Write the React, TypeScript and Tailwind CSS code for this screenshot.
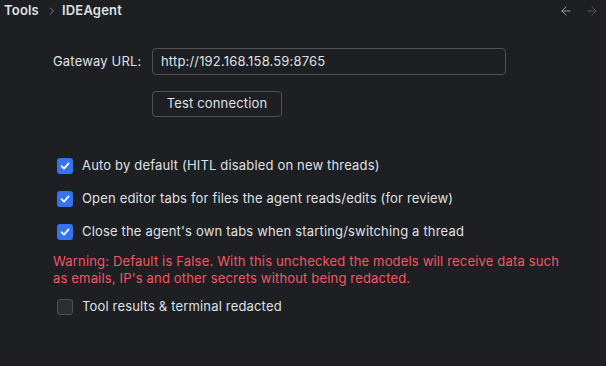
import { ArrowLeft, ArrowRight, ChevronRight } from "lucide-react";

const font = { fontFamily: "Inter, 'Noto Sans', sans-serif" };

const Check = ({ checked }: { checked: boolean }) =>
  checked ? (
    <span className="flex h-4 w-4 shrink-0 items-center justify-center rounded-[3px] bg-[#3574f0]">
      <svg width="12" height="12" viewBox="0 0 12 12" fill="none">
        <path d="M2.5 6.2 L5 8.6 L9.6 3.4" stroke="white" strokeWidth="1.7" strokeLinecap="round" strokeLinejoin="round" />
      </svg>
    </span>
  ) : (
    <span className="h-4 w-4 shrink-0 rounded-[3px] border border-[#4e5157] bg-[#2b2d30]" />
  );

const Row = ({ checked, label }: { checked: boolean; label: string }) => (
  <label className="flex h-4 items-center gap-[9px]">
    <Check checked={checked} />
    <span className="text-[13px] tracking-[0.17px] text-[#dfe1e5]">{label}</span>
  </label>
);

export default function App() {
  return (
    <main style={font} className="h-[366px] w-[606px] overflow-hidden bg-[#1e1f22] text-[#dfe1e5]">
      <header className="flex h-[22px] items-center justify-between pl-1 pr-[7px]">
        <div className="flex items-center text-[13px] font-semibold tracking-[0.2px]">
          <span>Tools</span>
          <ChevronRight className="ml-[7px] mr-[4px] text-[#9da0a8]" size={12} strokeWidth={1.5} />
          <span>IDEAgent</span>
        </div>
        <div className="flex items-center gap-[12px]">
          <ArrowLeft size={14} strokeWidth={1.5} className="text-[#a8abb0]" />
          <ArrowRight size={14} strokeWidth={1.5} className="text-[#5a5d63]" />
        </div>
      </header>

      <section className="pl-[53px] pt-[26px] tracking-[0.17px]">
        <div className="flex items-center">
          <span className="w-[99px] text-[13px]">Gateway URL:</span>
          <div className="flex h-[27px] w-[354px] items-center rounded-[4px] border border-[#4e5157] px-[8px] text-[13px]">
            http://192.168.158.59:8765
          </div>
        </div>
        <div className="mt-[15px] pl-[99px]">
          <button className="h-[26px] w-[130px] rounded-[4px] border border-[#4e5157] text-[13px] tracking-[0.17px] text-[#dfe1e5]">
            Test connection
          </button>
        </div>
      </section>

      <section className="flex flex-col gap-[17px] pl-[57px] pt-[41px]">
        <Row checked label="Auto by default (HITL disabled on new threads)" />
        <Row checked label="Open editor tabs for files the agent reads/edits (for review)" />
        <Row checked label="Close the agent's own tabs when starting/switching a thread" />
      </section>

      <p className="mt-[13px] w-[570px] pl-[53px] text-[13px] leading-[17px] tracking-[0.17px] text-[#f75464]">
        Warning: Default is False. With this unchecked the models will receive data such as emails, IP's and other secrets without being redacted.
      </p>

      <div className="pl-[57px] pt-[12px]">
        <Row checked={false} label="Tool results & terminal redacted" />
      </div>
    </main>
  );
}
